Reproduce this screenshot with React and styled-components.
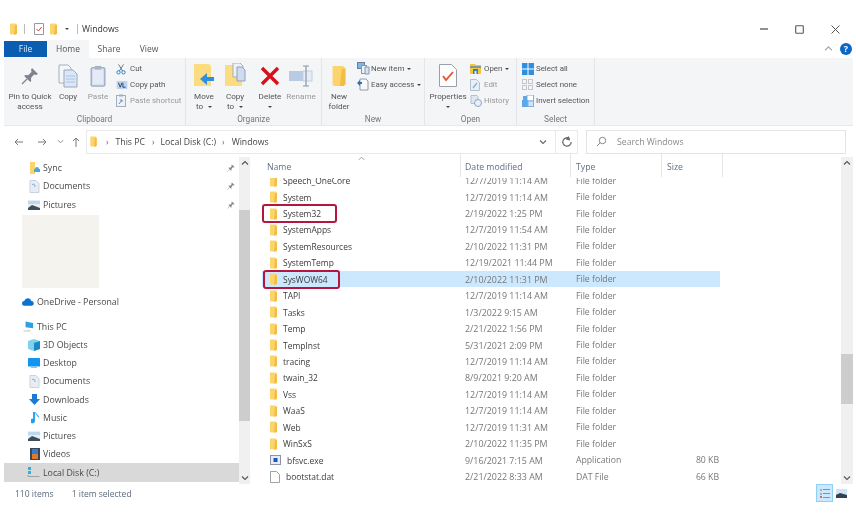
import React from "react";
import styled, { createGlobalStyle } from "styled-components";

const Global = createGlobalStyle`
  html, body { margin: 0; padding: 0; background: #fff; }
  body { font-family: "Open Sans", "Noto Sans", "Liberation Sans", sans-serif; color: #3c3c3c; }
  * { box-sizing: border-box; }
`;

const Window = styled.div`
  width: 856px; height: 515px; display: flex; flex-direction: column; padding: 20px 3px 10px 4px;
  overflow: hidden; filter: blur(0.4px); font-size: 8.7px; background: #fff;
`;
const TitleBar = styled.div`
  height: 20px; display: flex; align-items: center; padding: 0 0 1px 6px;
`;
const Quick = styled.span`
  display: inline-flex; align-items: center; margin-left: ${p => p.$ml || 0}px;
`;
const Bar = styled.span`
  width: 1px; height: 10px; background: #bbb; margin-left: ${p => p.$ml}px;
`;
const Title = styled.span`
  font-size: 8.7px; color: #333; margin-left: 4px;
`;
const Controls = styled.div`
  margin-left: auto; display: flex; align-items: center; gap: 27px; padding-right: 13px;
`;
const TabsRow = styled.div`
  height: 18px; display: flex; align-items: stretch;
`;
const FileTab = styled.div`
  width: 43px; height: 16px; margin-top: 1px; background: #0a5db0; color: #dfeafa;
  display: flex; align-items: center; justify-content: center; font-size: 8.5px;
`;
const Tab = styled.div`
  width: ${p => p.$w}px; display: flex; align-items: center; justify-content: center; font-size: 8.5px; color: #555;
  background: ${p => p.$active ? "#f4f5f7" : "transparent"};
`;
const RibbonTail = styled.div`
  margin-left: auto; display: flex; align-items: center; gap: 7px; padding-right: 1px;
`;
const Help = styled.span`
  width: 12px; height: 12px; border-radius: 50%; background: #0a66c8; color: #fff; font-size: 9px; font-weight: 700;
  display: flex; align-items: center; justify-content: center; line-height: 1;
`;
const Ribbon = styled.div`
  height: 68px; background: #f4f5f7; display: flex; border-bottom: 1px solid #e8e9eb;
  font-family: Roboto, "Open Sans", sans-serif;
`;
const Group = styled.div`
  width: ${p => p.$w}px; border-right: 1px solid #e4e5e8; display: flex; flex-direction: column; flex: none;
`;
const GroupBody = styled.div`
  height: 57px; display: flex; padding-left: ${p => p.$pl || 0}px; padding-top: 3px;
`;
const GroupLabel = styled.div`
  text-align: center; color: #777; font-size: 8.3px; line-height: 11px;
`;
const Large = styled.div`
  width: ${p => p.$w}px; flex: none; display: flex; flex-direction: column; align-items: center; text-align: center;
  color: ${p => p.$dim ? "#999" : "#555"};
  line-height: 10.5px; font-size: 8.1px; white-space: nowrap;
`;
const LargeIcon = styled.div`
  height: 30px; display: flex; align-items: center; justify-content: center;
`;
const Small = styled.div`
  display: flex; flex-direction: column; margin-left: ${p => p.$ml || 0}px;
`;
const SmallRow = styled.div`
  height: 16px; display: flex; align-items: center; white-space: nowrap; font-size: 7.9px;
  color: ${p => p.$dim ? "#999" : "#555"};
`;
const SmallIcon = styled.span`
  width: 14px; flex: none; display: flex; align-items: center; justify-content: flex-start;
`;
const Caret = styled.span`
  display: inline-block; width: 0; height: 0; border: 2px solid transparent; border-top: 2.5px solid #444; border-bottom: 0;
  margin-left: ${p => p.$ml ?? 3}px; vertical-align: middle;
`;
const AddressRow = styled.div`
  height: 24px; margin-top: 4px; display: flex; align-items: center;
`;
const NavSet = styled.div`
  width: 82px; display: flex; align-items: center; padding-left: 9px;
`;
const NavSlot = styled.span`
  width: ${p => p.$w}px; margin-left: ${p => p.$ml || 0}px; display: flex; justify-content: center; flex: none;
`;
const Crumbs = styled.div`
  width: 469px; height: 24px; border: 1px solid #e9e9e9; border-right: 0; display: flex; align-items: center; padding-left: 3px; font-size: 8.7px; color: #444;
`;
const Crumb = styled.span`
  margin: 0 ${p => p.$mr}px 0 ${p => p.$ml}px; white-space: nowrap;
`;
const Sep = styled.span`
  color: #666; font-size: 8.500px; line-height: 1; margin-left: ${p => p.$ml || 0}px;
`;
const CrumbEnd = styled.span`
  margin-left: auto; margin-right: 8px; display: flex;
`;
const Refresh = styled.div`
  width: 23px; height: 24px; border: 1px solid #e9e9e9; display: flex; align-items: center; justify-content: center;
`;
const Search = styled.div`
  width: 260px; height: 24px; margin-left: 8px; border: 1px solid #e4e4e4; display: flex; align-items: center; padding-left: 9px; gap: 10px;
  color: #8a8a8a; font-size: 8.7px;
`;
const Main = styled.div`
  height: 331px; display: flex; min-height: 0;
`;
const Sidebar = styled.div`
  width: 235px; flex: none; padding-top: 5px; display: flex; flex-direction: column;
`;
const NavRow = styled.div`
  height: 18.25px; flex: none; display: flex; align-items: center; padding-left: ${p => p.$pl}px; gap: 3px; padding-right: 4px; white-space: nowrap;
  font-size: 8.8px; color: #4a4a4a;
  background: ${p => p.$active ? "#d9d9d9" : "transparent"};
`;
const PinSlot = styled.span`
  margin-left: auto; display: flex;
`;
const Blank = styled.div`
  width: 77px; height: 73px; margin: 1px 0 5px 18px; background: #f5f3ee; flex: none;
`;
const Spacer = styled.div`
  height: ${p => p.$h}px; flex: none;
`;
const Scroll = styled.div`
  width: ${p => p.$w}px; flex: none; background: #f0f0f0; display: flex; flex-direction: column; align-items: center; margin-top: ${p => p.$mt || 0}px;
`;
const ScrollEnd = styled.div`
  height: 13px; display: flex; align-items: center; justify-content: center; flex: none;
`;
const Thumb = styled.div`
  width: 100%; height: ${p => p.$h}px; margin-top: ${p => p.$top}px; background: #cdcdcd; flex: none;
`;
const ScrollFill = styled.div`flex: 1;`;
const Files = styled.div`
  flex: 1; margin-left: 12px; display: flex; flex-direction: column; min-width: 0; overflow: hidden;
`;
const Cols = "199px 110px 91px 61px";
const Header = styled.div`
  height: 24.5px; flex: none; display: grid; grid-template-columns: ${Cols}; position: relative; z-index: 1; background: #fff; color: #5c6f86; font-size: 8.7px;
`;
const HeadCell = styled.div`
  display: flex; align-items: center; padding: 3.500px 0 0 ${p => p.$pl}px; border-right: 1px solid #e6e6e6; position: relative; height: 23px;
`;
const Sort = styled.span`
  position: absolute; left: 96px; top: 1px;
  display: flex;
`;
const RowsClip = styled.div`
  flex: 1; overflow: hidden;
`;
const Rows = styled.div`
  margin-top: -6px;
`;
const Row = styled.div`
  height: 16.45px; display: grid; grid-template-columns: ${Cols}; align-items: center; position: relative;
  background: ${p => p.$sel ? "#cce8ff" : "transparent"};
  width: 458px;
  &::after {
    content: ${p => p.$mark ? '""' : "none"}; position: absolute; left: ${p => p.$sel ? 1 : 0}px; top: -1.5px; bottom: -1.5px; width: ${p => p.$mark}px;
    border: 2.3px solid #b5153f; border-radius: 3px;
  }
`;
const NameCell = styled.div`
  display: flex; align-items: center; gap: 6px; padding-left: 8px; color: #3a3a3a; font-size: 8.45px; white-space: nowrap;
`;
const Meta = styled.div`
  padding-left: ${p => p.$pl}px; color: #777; font-size: ${p => p.$fs || 8.7}px; white-space: nowrap; text-align: ${p => p.$right ? "right" : "left"}; padding-right: ${p => p.$pr || 0}px;
`;
const StatusBar = styled.div`
  flex: 1; display: flex; align-items: center; padding: 0 0 3px 11px; font-size: 8.5px; color: #5c6b7c;
`;
const Status = styled.span`
  margin-right: ${p => p.$mr || 0}px;
`;
const Views = styled.div`
  margin-left: auto; display: flex; align-items: center; gap: 3px; padding-right: 6px;
`;
const ViewOn = styled.div`
  width: 17px; height: 18px; background: #cce8ff; border: 1px solid #8fd0f2; display: flex; align-items: center; justify-content: center;
`;

const Folder = ({ w = 7, h = 12 }) => (
  <svg width={w} height={h} viewBox="0 0 7 12"><path d="M0 0.5h6l1 1.5v8.5l-1 1H1L0 11z" fill="#fbd56b"/><path d="M5 2h2v8.5l-1 1H4z" fill="#f3bd45"/></svg>
);
const Pin = ({ s = 18, c = "#7d838a" }) => (
  <svg width={s} height={s} viewBox="0 0 18 18"><path d="M11 1l6 6-2 1-2-.5L10 11l.2 3-1 1-6-6 1-1 3 .2L10.500 5 10 3z" fill={c}/><path d="M6 12l-5 5" stroke={c} strokeWidth="1.2"/></svg>
);
const CopyIcon = () => (
  <svg width="20" height="24" viewBox="0 0 20 24"><path d="M1 1h9l3 3v15H1z" fill="#f3f6fa" stroke="#a9b0ba"/><path d="M6 6h9l4 4v13H6z" fill="#dce6f5" stroke="#9aa7b8"/><path d="M8 12h9M8 15h9M8 18h9" stroke="#a8c4e8"/></svg>
);
const PasteIcon = () => (
  <svg width="16" height="22" viewBox="0 0 17 24"><rect x="1" y="3" width="15" height="20" rx="1" fill="#d5def0" stroke="#7f8ea8"/><rect x="3" y="5" width="11" height="16" fill="#e4eaf6"/><rect x="5" y="1" width="7" height="4" fill="#aab3c4"/></svg>
);
const CutIcon = () => (
  <svg width="10" height="12" viewBox="0 0 12 13"><path d="M3 1l5 8M9 1L4 9" stroke="#6d7a8c" strokeWidth="1.2"/><circle cx="3" cy="10.5" r="2" fill="none" stroke="#2f7fd0" strokeWidth="1.2"/><circle cx="9" cy="10.5" r="2" fill="none" stroke="#2f7fd0" strokeWidth="1.2"/></svg>
);
const CopyPathIcon = () => (
  <svg width="12" height="8" viewBox="0 0 12 9"><rect width="12" height="9" fill="#b8d4f2"/><path d="M2 2l2 5 2-5M7 2v5h3" stroke="#335" fill="none"/></svg>
);
const ShortcutIcon = () => (
  <svg width="10" height="13" viewBox="0 0 10 13"><rect x=".5" y="1.5" width="9" height="11" fill="#eef1f6" stroke="#a3aebf"/><rect x="3" y=".5" width="4" height="2" fill="#a3aebf"/><path d="M3 10l3-4M4 6h2v2" stroke="#6f8fbd" fill="none"/></svg>
);
const MoveIcon = () => (
  <svg width="20" height="24" viewBox="0 0 20 24"><path d="M0 0h15l2 2v20H0z" fill="#fbdc80"/><path d="M20 12h-7V8l-7 6 7 6v-4h7z" fill="#2e8fe0" transform="translate(0 1)"/></svg>
);
const CopyToIcon = () => (
  <svg width="21" height="25" viewBox="0 0 21 25"><path d="M0 2h17v21H0z" fill="#fbdc80"/><path d="M8 0h7l3 3v11H8z" fill="#eef2f8" stroke="#a4aebd"/><path d="M12 4h5l3 3v11h-8z" fill="#cfdcf0" stroke="#8fa0b8"/></svg>
);
const DeleteIcon = () => (
  <svg width="20" height="20" viewBox="0 0 20 20"><path d="M2 2l16 16M18 2L2 18" stroke="#d8101a" strokeWidth="3.4"/></svg>
);
const RenameIcon = () => (
  <svg width="24" height="22" viewBox="0 0 24 22"><rect x="0" y="6" width="21" height="10" fill="#b9cbe4"/><rect x="14" y="6" width="9" height="10" fill="#e6edf6" stroke="#c4d0de"/><path d="M14 1h6M17 1v20M14 21h6" stroke="#8b97a8" strokeWidth="1.2" fill="none"/></svg>
);
const NewItemIcon = () => (
  <svg width="13" height="13" viewBox="0 0 13 13"><rect x=".5" y=".5" width="7" height="6" fill="#7fb6e8" stroke="#6b7f99"/><rect x="4.5" y="3.5" width="5" height="8" fill="#eef2f8" stroke="#8898ad"/><path d="M8 5h4v7H8z" fill="#d8e2f0" stroke="#8898ad"/></svg>
);
const EasyIcon = () => (
  <svg width="12" height="13" viewBox="0 0 12 13"><path d="M3 1h6l2 2v9H3z" fill="#f8f9fb" stroke="#8f9aaa"/><path d="M0 5l3-3v2h2v2H3v2z" fill="#2e6fb8"/></svg>
);
const PropsIcon = () => (
  <svg width="18" height="23" viewBox="0 0 18 23"><path d="M.5.5h12l5 5v17H.5z" fill="#fdfdfd" stroke="#98a0aa"/><path d="M4 12l3 4 7-8" stroke="#e0552b" strokeWidth="1.8" fill="none"/></svg>
);
const OpenIcon = () => (
  <svg width="11" height="10" viewBox="0 0 11 10"><path d="M0 0h5l1 1h5v9H0z" fill="#f5c542"/><path d="M3 10V5h5v5" fill="#2f7fd0"/><path d="M4.5 10V7h2v3" fill="#f5e7b0"/><path d="M0 3h11" stroke="#2f7fd0" strokeWidth="1.2"/></svg>
);
const EditIcon = () => (
  <svg width="10" height="12" viewBox="0 0 10 12"><path d="M.5.5h6l3 3v8h-9z" fill="#e8eef6" stroke="#b3c0d0"/><path d="M3 9l4-5" stroke="#8fb0d8" strokeWidth="1.4"/></svg>
);
const HistoryIcon = () => (
  <svg width="12" height="12" viewBox="0 0 12 12"><path d="M1 .5h6l1 1v7H1z" fill="#dde6f2" stroke="#b3c0d0"/><circle cx="8" cy="8" r="3.5" fill="#eaf0f8" stroke="#8ca4c4"/></svg>
);
const SelAll = () => (
  <svg width="12" height="12" viewBox="0 0 12 12"><rect width="12" height="12" fill="#2e8fe0"/><path d="M6 0v12M0 6h12" stroke="#fff"/></svg>
);
const SelNone = () => (
  <svg width="11" height="11" viewBox="0 0 11 11" fill="none" stroke="#c3c8ce"><rect x=".5" y=".5" width="4" height="4"/><rect x="6.5" y=".5" width="4" height="4"/><rect x=".5" y="6.5" width="4" height="4"/><rect x="6.5" y="6.5" width="4" height="4"/></svg>
);
const SelInv = () => (
  <svg width="12" height="12" viewBox="0 0 12 12"><rect x="5" y="0" width="6.5" height="6" fill="#fff" stroke="#7fb0df"/><rect x="0" y="5" width="6" height="7" fill="#5fa8e8"/><rect x="6" y="6" width="5.5" height="5.5" fill="#cfe4f8" stroke="#7fb0df"/><rect x="1" y="1" width="4" height="4" fill="#5fa8e8"/></svg>
);
const Chev = ({ d = "up", c = "#666", s = 8 }) => (
  <svg width={s} height={s} viewBox="0 0 8 8"><path d={d === "up" ? "M1 5.5L4 2.5 7 5.5" : "M1 2.5L4 5.5 7 2.5"} fill="none" stroke={c} strokeWidth="1.1"/></svg>
);
const ArrowH = ({ dir = "l", c = "#7a7a7a" }) => (
  <svg width="9" height="8" viewBox="0 0 9 8" style={{ transform: dir === "r" ? "scaleX(-1)" : "none" }}><path d="M9 4H1M4 1L1 4l3 3" fill="none" stroke={c} strokeWidth="1"/></svg>
);
const ArrowUp = () => (
  <svg width="8" height="10" viewBox="0 0 8 10"><path d="M4 10V1M1 4l3-3 3 3" fill="none" stroke="#777" strokeWidth="1"/></svg>
);
const Refr = () => (
  <svg width="12" height="12" viewBox="0 0 10 10"><path d="M8.500 5a3.500 3.500 0 1 1-1.200-2.700M6.500.5L5 2.600l2.500.6" fill="none" stroke="#666" strokeWidth="1"/></svg>
);
const Glass = () => (
  <svg width="11" height="11" viewBox="0 0 11 11"><circle cx="6.5" cy="4.5" r="3.2" fill="none" stroke="#888"/><path d="M4 7L1 10" stroke="#888"/></svg>
);
const Min = () => <svg width="8" height="8" viewBox="0 0 8 8"><path d="M0 4h8" stroke="#555" strokeWidth="1.3"/></svg>;
const Max = () => <svg width="9" height="9" viewBox="0 0 9 9"><rect x=".7" y=".7" width="7.6" height="7.6" rx=".8" fill="none" stroke="#555" strokeWidth="1.1"/></svg>;
const Close = () => <svg width="9" height="9" viewBox="0 0 9 9"><path d="M.5.5l8 8M8.5.5l-8 8" stroke="#555" strokeWidth="1"/></svg>;

const Doc = ({ c = "#c9d3e0" }) => <svg width="11" height="13" viewBox="0 0 11 13"><path d="M1 .5h6l3 3v9H1z" fill="#e9edf3" stroke={c}/><path d="M3 5c2-2 3 0 3 2" stroke="#6da0d8" fill="none"/></svg>;
const Pic = () => <svg width="12" height="10" viewBox="0 0 12 10"><rect width="12" height="10" fill="#e8edf3"/><rect y="1" width="12" height="3" fill="#bcd8f0"/><path d="M0 8l4-3 8 3v2H0z" fill="#3f4c5a"/></svg>;
const SyncIc = () => <svg width="11" height="12" viewBox="0 0 11 12"><path d="M1 0h5v12H1z" fill="#fbd56b"/><path d="M5 7h6v3H5z" fill="#4aa3e8"/><circle cx="8" cy="7" r="2" fill="#4aa3e8"/></svg>;
const Cloud = () => <svg width="12" height="8" viewBox="0 0 13 8"><path d="M2.5 8a2.5 2.5 0 0 1 0-5C3 1 5 0 6.5 0 8.500 0 9.500 1.500 10 3a2.500 2.500 0 0 1 .5 5z" fill="#0a72d0"/></svg>;
const PcIc = () => <svg width="11" height="11" viewBox="0 0 13 12"><path d="M3 0l9 2v6L3 7z" fill="#2fa0e8"/><path d="M0 11l9-1-1 2H1z" fill="#c6ccd2"/></svg>;
const Cube = () => <svg width="12" height="12" viewBox="0 0 12 12"><path d="M0 2l6-2 6 2v8l-6 2-6-2z" fill="#7dd3ee"/><path d="M6 4l6-2v8l-6 2z" fill="#1b8ac4"/></svg>;
const Desk = () => <svg width="12" height="10" viewBox="0 0 12 10"><rect width="12" height="8.500" rx=".5" fill="#1295ee"/><rect x="3" y="8.500" width="6" height="1.500" fill="#88c4f0"/></svg>;
const Down = () => <svg width="11" height="11" viewBox="0 0 11 11"><path d="M3 0h5v5h3l-5.500 6L0 5h3z" fill="#1f79d4"/></svg>;
const Note = () => <svg width="9" height="12" viewBox="0 0 9 12"><path d="M3.500 0v9a2 2 0 1 1-1-1.700V0zM3.500 0c1 2 4 2.500 4 5.500" fill="#16a0ee" stroke="#16a0ee" strokeWidth=".8"/></svg>;
const Video = () => <svg width="10" height="12" viewBox="0 0 10 12"><rect width="10" height="12" fill="#3a4555"/><rect x="2" y="1" width="6" height="5" fill="#2f7fd0"/><rect x="2" y="6" width="6" height="5" fill="#e0762f"/></svg>;
const Drive = () => <svg width="13" height="11" viewBox="0 0 13 11"><path d="M1 0h3v3H1zM1 4h3v3H1z" fill="#26b3dc"/><path d="M0 8l1 2h11l1-1H3z" fill="#9aa2aa"/></svg>;
const Exe = () => <svg width="11" height="10" viewBox="0 0 11 10"><rect x=".5" y=".5" width="10" height="9" fill="#e9edf3" stroke="#8b95a3"/><rect x="3.500" y="3" width="4" height="4" fill="#1458c8"/></svg>;
const Dat = () => <svg width="10" height="12" viewBox="0 0 10 12"><path d="M.5.5h6l3 3v8h-9z" fill="#fff" stroke="#9aa2aa"/></svg>;
const DetailsV = () => <svg width="11" height="11" viewBox="0 0 11 11"><path d="M4 1.500h7M4 5.500h7M4 9.500h7" stroke="#8a9099"/><path d="M1 1h2v2H1zM1 5h2v2H1z" fill="#aab"/><path d="M1 8h2v2H1z" fill="#d66"/></svg>;
const Thumbs = () => <svg width="11" height="9" viewBox="0 0 11 9"><rect width="11" height="9" fill="#cfe4f4"/><path d="M0 6l4-2 7 2v3H0z" fill="#33414f"/></svg>;

const files = [
  ["Speech_OneCore", "12/7/2019 11:14 AM", "File folder"],
  ["System", "12/7/2019 11:14 AM", "File folder"],
  ["System32", "2/19/2022 1:25 PM", "File folder", "", 71],
  ["SystemApps", "12/7/2019 11:54 AM", "File folder"],
  ["SystemResources", "2/10/2022 11:31 PM", "File folder"],
  ["SystemTemp", "12/19/2021 11:44 PM", "File folder"],
  ["SysWOW64", "2/10/2022 11:31 PM", "File folder", "", 73, true],
  ["TAPI", "12/7/2019 11:14 AM", "File folder"],
  ["Tasks", "1/3/2022 9:15 AM", "File folder"],
  ["Temp", "2/21/2022 1:56 PM", "File folder"],
  ["TempInst", "5/31/2021 2:09 PM", "File folder"],
  ["tracing", "12/7/2019 11:14 AM", "File folder"],
  ["twain_32", "8/9/2021 9:20 AM", "File folder"],
  ["Vss", "12/7/2019 11:14 AM", "File folder"],
  ["WaaS", "12/7/2019 11:14 AM", "File folder"],
  ["Web", "12/7/2019 11:31 AM", "File folder"],
  ["WinSxS", "2/10/2022 11:35 PM", "File folder"],
  ["bfsvc.exe", "9/16/2021 7:15 AM", "Application", "80 KB", 0, false, <Exe />],
  ["bootstat.dat", "2/21/2022 8:33 AM", "DAT File", "66 KB", 0, false, <Dat />],
];

export default function App() {
  return (
    <Window>
      <Global />
      <TitleBar>
        <Folder />
        <Bar $ml={7} />
        <Quick $ml={9}><svg width="10" height="12" viewBox="0 0 10 12"><path d="M.5.5h9v11h-9z" fill="#fff" stroke="#999"/><path d="M2.500 6l2 2 3-4" stroke="#d9452b" fill="none"/></svg></Quick>
        <Quick $ml={6}><Folder /></Quick>
        <Quick $ml={7}><Caret $ml={1} /></Quick>
        <Bar $ml={8} />
        <Title>Windows</Title>
        <Controls><Min /><Max /><Close /></Controls>
      </TitleBar>
      <TabsRow>
        <FileTab>File</FileTab>
        <Tab $w={42} $active>Home</Tab>
        <Tab $w={40}>Share</Tab>
        <Tab $w={40}>View</Tab>
        <RibbonTail><Chev c="#aaa" s={9} /><Help>?</Help></RibbonTail>
      </TabsRow>
      <Ribbon>
        <Group $w={182}>
          <GroupBody $pl={3}>
            <Large $w={46}><LargeIcon><Pin /></LargeIcon>Pin to Quick<br />access</Large>
            <Large $w={30}><LargeIcon><CopyIcon /></LargeIcon>Copy</Large>
            <Large $w={30} $dim><LargeIcon><PasteIcon /></LargeIcon>Paste</Large>
            <Small $ml={3}>
              <SmallRow><SmallIcon><CutIcon /></SmallIcon>Cut</SmallRow>
              <SmallRow><SmallIcon><CopyPathIcon /></SmallIcon>Copy path</SmallRow>
              <SmallRow $dim><SmallIcon><ShortcutIcon /></SmallIcon>Paste shortcut</SmallRow>
            </Small>
          </GroupBody>
          <GroupLabel>Clipboard</GroupLabel>
        </Group>
        <Group $w={136}>
          <GroupBody $pl={3}>
            <Large $w={30}><LargeIcon><MoveIcon /></LargeIcon><span>Move<br />to <Caret /></span></Large>
            <Large $w={32}><LargeIcon><CopyToIcon /></LargeIcon><span>Copy<br />to <Caret /></span></Large>
            <Large $w={38}><LargeIcon><DeleteIcon /></LargeIcon><span>Delete<br /><Caret $ml={0} /></span></Large>
            <Large $w={24} $dim><LargeIcon><RenameIcon /></LargeIcon>Rename</Large>
          </GroupBody>
          <GroupLabel>Organize</GroupLabel>
        </Group>
        <Group $w={103}>
          <GroupBody $pl={1}>
            <Large $w={32}><LargeIcon><Folder w={14} h={22} /></LargeIcon>New<br />folder</Large>
            <Small $ml={2}>
              <SmallRow><SmallIcon><NewItemIcon /></SmallIcon>New item<Caret /></SmallRow>
              <SmallRow><SmallIcon><EasyIcon /></SmallIcon>Easy access<Caret /></SmallRow>
            </Small>
          </GroupBody>
          <GroupLabel>New</GroupLabel>
        </Group>
        <Group $w={92}>
          <GroupBody $pl={1}>
            <Large $w={44}><LargeIcon><PropsIcon /></LargeIcon><span>Properties<br /><Caret $ml={0} /></span></Large>
            <Small>
              <SmallRow><SmallIcon><OpenIcon /></SmallIcon>Open<Caret /></SmallRow>
              <SmallRow $dim><SmallIcon><EditIcon /></SmallIcon>Edit</SmallRow>
              <SmallRow $dim><SmallIcon><HistoryIcon /></SmallIcon>History</SmallRow>
            </Small>
          </GroupBody>
          <GroupLabel>Open</GroupLabel>
        </Group>
        <Group $w={78}>
          <GroupBody $pl={5}>
            <Small>
              <SmallRow><SmallIcon><SelAll /></SmallIcon>Select all</SmallRow>
              <SmallRow><SmallIcon><SelNone /></SmallIcon>Select none</SmallRow>
              <SmallRow><SmallIcon><SelInv /></SmallIcon>Invert selection</SmallRow>
            </Small>
          </GroupBody>
          <GroupLabel>Select</GroupLabel>
        </Group>
      </Ribbon>
      <AddressRow>
        <NavSet>
          <NavSlot $w={10}><ArrowH /></NavSlot>
          <NavSlot $w={24} $ml={7}><ArrowH dir="r" /></NavSlot>
          <NavSlot $w={12}><Chev d="down" c="#888" s={7} /></NavSlot>
          <NavSlot $w={20}><ArrowUp /></NavSlot>
        </NavSet>
        <Crumbs>
          <Folder w={7} h={11} />
          <Sep $ml={9}>›</Sep><Crumb $ml={7} $mr={7}>This PC</Crumb>
          <Sep>›</Sep><Crumb $ml={6} $mr={6}>Local Disk (C:)</Crumb>
          <Sep>›</Sep><Crumb $ml={7} $mr={0}>Windows</Crumb>
          <CrumbEnd><Chev d="down" c="#666" /></CrumbEnd>
        </Crumbs>
        <Refresh><Refr /></Refresh>
        <Search><Glass />Search Windows</Search>
      </AddressRow>
      <Main>
        <Sidebar>
          <NavRow $pl={25}><SyncIc />Sync<PinSlot><Pin s={8} c="#888" /></PinSlot></NavRow>
          <NavRow $pl={25}><Doc />Documents<PinSlot><Pin s={8} c="#888" /></PinSlot></NavRow>
          <NavRow $pl={24}><Pic />Pictures<PinSlot><Pin s={8} c="#888" /></PinSlot></NavRow>
          <Blank />
          <NavRow $pl={18}><Cloud />OneDrive - Personal</NavRow>
          <Spacer $h={6.500} />
          <NavRow $pl={19}><PcIc />This PC</NavRow>
          <NavRow $pl={24}><Cube />3D Objects</NavRow>
          <NavRow $pl={24}><Desk />Desktop</NavRow>
          <NavRow $pl={25}><Doc />Documents</NavRow>
          <NavRow $pl={25}><Down />Downloads</NavRow>
          <NavRow $pl={27}><Note />Music</NavRow>
          <NavRow $pl={24}><Pic />Pictures</NavRow>
          <NavRow $pl={26}><Video />Videos</NavRow>
          <NavRow $pl={23} $active><Drive />Local Disk (C:)</NavRow>
        </Sidebar>
        <Scroll $w={11} $mt={3}>
          <ScrollEnd><Chev c="#555" /></ScrollEnd>
          <Thumb $top={40} $h={211} />
          <ScrollFill />
          <ScrollEnd><Chev d="down" c="#555" /></ScrollEnd>
        </Scroll>
        <Files>
          <Header>
            <HeadCell $pl={5}>Name<Sort><Chev c="#999" s={7} /></Sort></HeadCell>
            <HeadCell $pl={4}>Date modified</HeadCell>
            <HeadCell $pl={5}>Type</HeadCell>
            <HeadCell $pl={5}>Size</HeadCell>
          </Header>
          <RowsClip>
            <Rows>
              {files.map(([n, d, t, sz, mark, sel, ic]) => (
                <Row key={n} $mark={mark} $sel={sel}>
                  <NameCell>{ic || <Folder />}{n}</NameCell>
                  <Meta $pl={4} $fs={8.9}>{d}</Meta>
                  <Meta $pl={5}>{t}</Meta>
                  <Meta $right $pr={4}>{sz}</Meta>
                </Row>
              ))}
            </Rows>
          </RowsClip>
        </Files>
        <Scroll $w={12} $mt={3}>
          <ScrollEnd><Chev c="#555" /></ScrollEnd>
          <Thumb $top={184} $h={50} />
          <ScrollFill />
          <ScrollEnd><Chev d="down" c="#555" /></ScrollEnd>
        </Scroll>
      </Main>
      <StatusBar>
        <Status $mr={18}>110 items</Status>
        <Status>1 item selected</Status>
        <Views><ViewOn><DetailsV /></ViewOn><Thumbs /></Views>
      </StatusBar>
    </Window>
  );
}
